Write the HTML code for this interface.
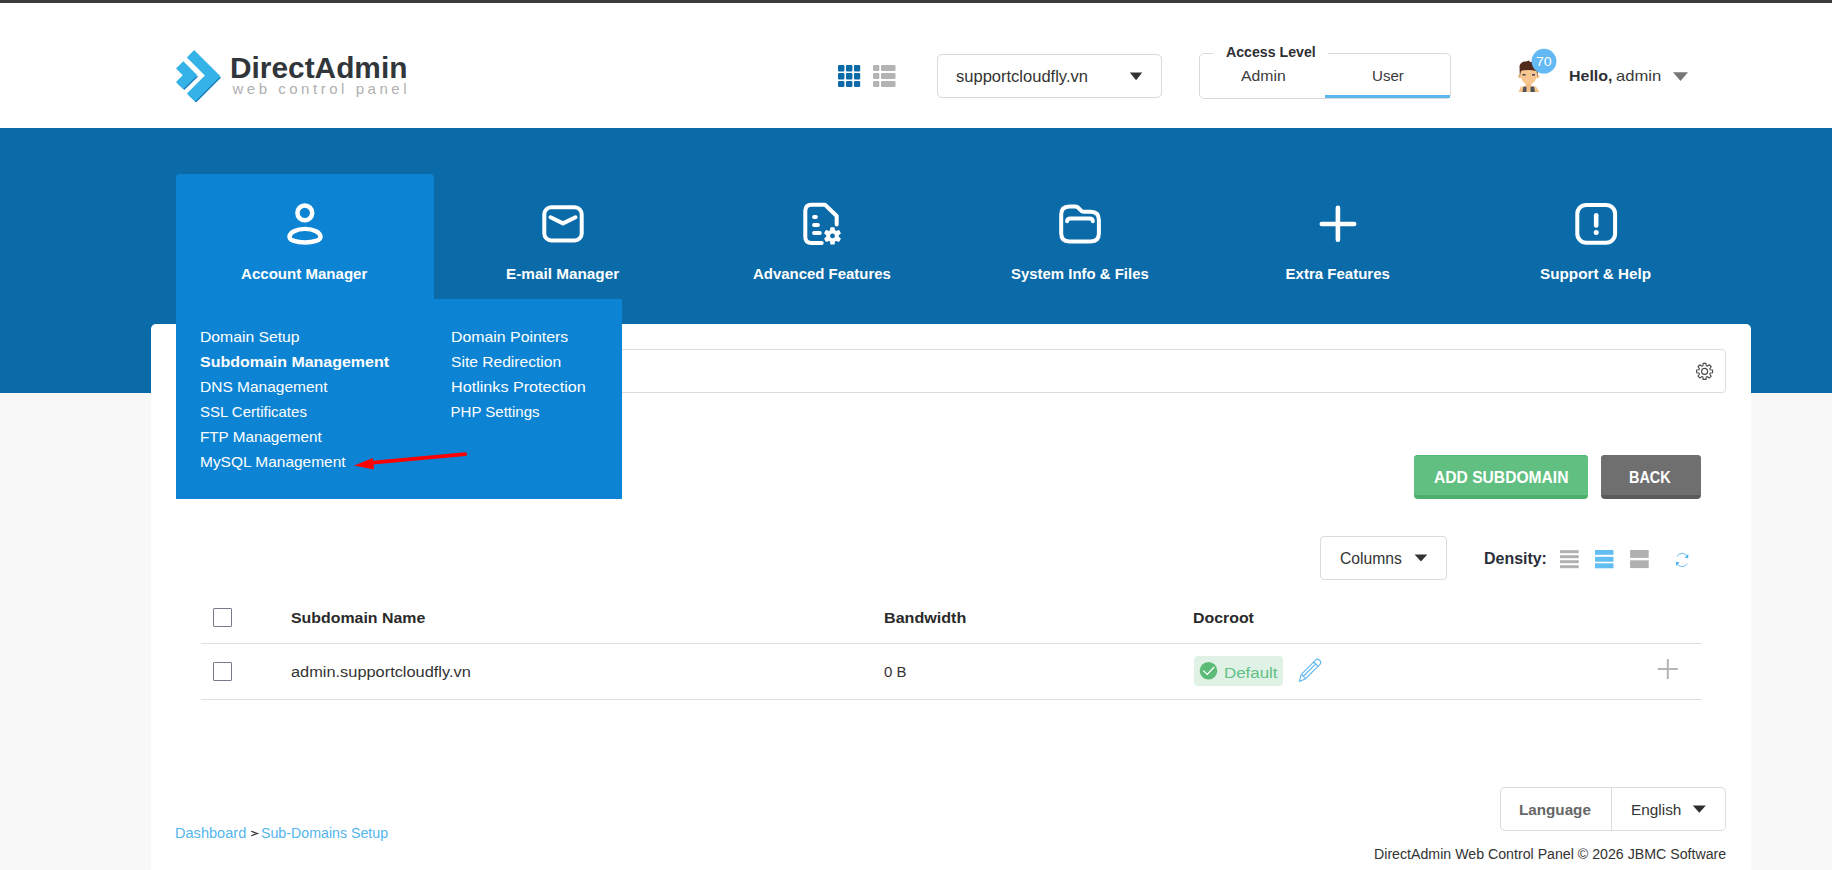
<!DOCTYPE html>
<html><head><meta charset="utf-8"><title>DirectAdmin</title>
<style>
html,body{margin:0;padding:0}
body{width:1832px;height:870px;overflow:hidden;position:relative;background:#f8f8f8;font-family:"Liberation Sans",sans-serif}
.a{position:absolute;box-sizing:border-box}
.t{position:absolute;line-height:1;white-space:pre;transform-origin:0 0}
svg.ov{position:absolute;left:0;top:0}
</style></head><body>
<div class="a" style="left:0;top:0;width:1832px;height:3px;background:#3b3b3b"></div>
<div class="a" style="left:0;top:3px;width:1832px;height:125px;background:#fff"></div>
<div class="a" style="left:0;top:128px;width:1832px;height:265px;background:#0b6aa8"></div>
<div class="a" style="left:151px;top:324px;width:1600px;height:600px;background:#fff;border-radius:5px 5px 0 0"></div>
<!-- search box -->
<div class="a" style="left:176px;top:349px;width:1550px;height:44px;border:1px solid #dcdcdc;border-radius:4px"></div>
<!-- active tab + dropdown -->
<div class="a" style="left:176px;top:174px;width:258px;height:126px;background:#0d84d3;border-radius:4px 4px 0 0"></div>
<div class="a" style="left:176px;top:298.5px;width:446px;height:200px;background:#0d84d3"></div>
<!-- header widgets -->
<div class="a" style="left:937px;top:54px;width:225px;height:44px;border:1px solid #d9d9d9;border-radius:5px"></div>
<div class="a" style="left:1199px;top:53px;width:252px;height:46px;border:1px solid #d9d9d9;border-radius:5px"></div>
<div class="a" style="left:1213px;top:50px;width:115px;height:8px;background:#fff"></div>
<div class="a" style="left:1325px;top:95px;width:125px;height:3px;background:#5db7ef"></div>
<!-- buttons -->
<div class="a" style="left:1414px;top:455px;width:174px;height:44px;background:#4caf6c;border-radius:4px"></div>
<div class="a" style="left:1414px;top:455px;width:174px;height:40px;background:#61bf81;border-radius:4px 4px 0 0;border-top:1px solid #56b776"></div>
<div class="a" style="left:1601px;top:455px;width:100px;height:44px;background:#5b5b5b;border-radius:4px"></div>
<div class="a" style="left:1601px;top:455px;width:100px;height:40px;background:#6f6f6f;border-radius:4px 4px 0 0"></div>
<!-- columns -->
<div class="a" style="left:1320px;top:536px;width:127px;height:43.5px;border:1px solid #dcdcdc;border-radius:4px"></div>
<!-- table -->
<div class="a" style="left:213px;top:608px;width:19px;height:19px;border:1px solid #767b8c;border-radius:1px"></div>
<div class="a" style="left:213px;top:662px;width:19px;height:19px;border:1px solid #767b8c;border-radius:1px"></div>
<div class="a" style="left:201px;top:643px;width:1500px;height:1px;background:#dedede"></div>
<div class="a" style="left:201px;top:699px;width:1500px;height:1px;background:#dedede"></div>
<div class="a" style="left:1194px;top:656px;width:89px;height:30px;background:#dff2e5;border-radius:4px"></div>
<!-- language -->
<div class="a" style="left:1500px;top:787px;width:226px;height:43.5px;border:1px solid #dcdcdc;border-radius:5px"></div>
<div class="a" style="left:1611px;top:788px;width:1px;height:42px;background:#dcdcdc"></div>

<svg class="ov" width="1832" height="870" viewBox="0 0 1832 870">
 <!-- logo -->
 <polygon points="205.9,76.5 221.4,77.3 196.1,102.6 187.9,94.5" fill="#1a7fbf"/>
 <polygon points="184.2,76.2 198.4,76.2 184.3,90.1 177,83" fill="#1a7fbf"/>
 <polygon points="194.1,50.1 220.4,76.3 195.1,101.6 186.9,93.5 204.9,75.5 186.9,57.5" fill="#35b3e8"/>
 <polygon points="183.3,61.3 197.3,75.2 183.3,89.1 176,81.9 182.7,75.2 176,68.5" fill="#35b3e8"/>
 <!-- grid/list -->
 <g fill="#0b69aa">
  <rect x="838" y="65" width="6.4" height="6.4" rx="1.2"/><rect x="846" y="65" width="6.4" height="6.4" rx="1.2"/><rect x="854" y="65" width="6.2" height="6.4" rx="1.2"/>
  <rect x="838" y="73" width="6.4" height="6.4" rx="1.2"/><rect x="846" y="73" width="6.4" height="6.4" rx="1.2"/><rect x="854" y="73" width="6.2" height="6.4" rx="1.2"/>
  <rect x="838" y="81" width="6.4" height="6" rx="1.2"/><rect x="846" y="81" width="6.4" height="6" rx="1.2"/><rect x="854" y="81" width="6.2" height="6" rx="1.2"/>
 </g>
 <g fill="#b3b3b3">
  <rect x="873" y="65" width="6.3" height="6" rx="1.2"/><rect x="881" y="65" width="14.5" height="6" rx="1.2"/>
  <rect x="873" y="73" width="6.3" height="6" rx="1.2"/><rect x="881" y="73" width="14.5" height="6" rx="1.2"/>
  <rect x="873" y="81" width="6.3" height="6" rx="1.2"/><rect x="881" y="81" width="14.5" height="6" rx="1.2"/>
 </g>
 <!-- select caret -->
 <polygon points="1129.8,72.5 1142.3,72.5 1136.05,80.2" fill="#333"/>
 <!-- avatar -->
 <g>
  <path d="M1518.5,92 L1521,86.5 L1536,86.5 L1539.5,92 Z" fill="#f5c28d"/>
  <path d="M1522.5,92 L1523.5,86.5 L1534,86.5 L1535,92 Z" fill="#4f5258"/>
  <rect x="1526.5" y="86" width="4" height="6" fill="#f5c28d"/>
  <rect x="1525.5" y="82" width="6" height="5" fill="#f2bb82"/>
  <circle cx="1519.8" cy="76.5" r="1.8" fill="#f5c28d"/>
  <circle cx="1537.6" cy="76.5" r="1.8" fill="#f5c28d"/>
  <ellipse cx="1528.7" cy="74.5" rx="8.3" ry="9.8" fill="#f7c690"/>
  <path d="M1519.8,77 L1519.5,66 Q1521,61 1526,61.5 L1529,60.5 L1530,62 Q1537,61.5 1537.8,67 L1537.6,77 L1536.5,71 Q1528,69 1521,71 Z" fill="#52291a"/>
  <rect x="1522.5" y="74" width="3" height="1.6" fill="#4a4a55"/>
  <rect x="1532" y="74" width="3" height="1.6" fill="#4a4a55"/>
 </g>
 <circle cx="1544" cy="61.2" r="12.4" fill="#62b9f3"/>
 <polygon points="1673,72.3 1688,72.3 1680.5,81" fill="#777"/>
 <!-- nav icons -->
 <g fill="none" stroke="#fff" stroke-linecap="round" stroke-linejoin="round">
  <circle cx="304.8" cy="212.9" r="7.4" stroke-width="4.5"/>
  <path d="M289.5,236.9 C289.5,232.4 296.4,228.9 305,228.9 C313.6,228.9 320.5,232.4 320.5,236.9 C320.5,240.1 313.6,242.5 305,242.5 C296.4,242.5 289.5,240.1 289.5,236.9 Z" stroke-width="4.4"/>
  <rect x="544.3" y="207.3" width="37.4" height="33.2" rx="7" stroke-width="4"/>
  <polyline points="550.5,217.3 563,223.4 575.5,217.3" stroke-width="4"/>
  <path d="M821.7,243.1 L811.6,243.1 Q805.3,243.1 805.3,236.8 L805.3,211 Q805.3,204.7 811.6,204.7 L825,204.7 L836.7,216 L836.7,224.5" stroke-width="4"/>
  <path d="M814.1,216.9 L815.9,216.9 M814.1,225.1 L817.9,225.1 M814.1,233.1 L819.8,233.1" stroke-width="4"/>
  <path d="M1069.4,206.4 L1075.5,206.4 C1079.5,206.4 1079.5,211.7 1083.5,211.7 L1090.7,211.7 Q1098.9,211.7 1098.9,219.9 L1098.9,233.2 Q1098.9,241.4 1090.7,241.4 L1069.4,241.4 Q1061.2,241.4 1061.2,233.2 L1061.2,214.6 Q1061.2,206.4 1069.4,206.4 Z" stroke-width="4"/>
  <path d="M1067.1,221.3 Q1067.1,218.5 1070.5,218.5 L1089.5,218.5 Q1092.8,218.5 1092.8,221.3" stroke-width="4"/>
  <path d="M1337.9,207.8 L1337.9,239.8 M1321.8,224 L1354.2,224" stroke-width="4.6"/>
  <rect x="1577.3" y="204.9" width="37.8" height="37.8" rx="9" stroke-width="4"/>
  <path d="M1596.2,215.3 L1596.2,225.4" stroke-width="4.6"/>
 </g>
 <circle cx="1596.2" cy="232.6" r="2.5" fill="#fff"/>
 <!-- gear on file icon -->
 <g transform="translate(832.5,235.9)" fill="#fff">
  <circle r="6.3"/>
  <rect x="-2.3" y="-8.7" width="4.6" height="17.4" rx="1.2"/>
  <rect x="-2.3" y="-8.7" width="4.6" height="17.4" rx="1.2" transform="rotate(60)"/>
  <rect x="-2.3" y="-8.7" width="4.6" height="17.4" rx="1.2" transform="rotate(120)"/>
  <circle r="2.4" fill="#0b6aa8"/>
 </g>
 <!-- search gear -->
 <g transform="translate(1704.6,371.4)" fill="none" stroke="#4a4a4a" stroke-width="1.1">
  <path d="M-1.63,-5.67 L-1.41,-7.98 L1.41,-7.98 L1.63,-5.67 L2.86,-5.16 L4.65,-6.64 L6.64,-4.65 L5.16,-2.86 L5.67,-1.63 L7.98,-1.41 L7.98,1.41 L5.67,1.63 L5.16,2.86 L6.64,4.65 L4.65,6.64 L2.86,5.16 L1.63,5.67 L1.41,7.98 L-1.41,7.98 L-1.63,5.67 L-2.86,5.16 L-4.65,6.64 L-6.64,4.65 L-5.16,2.86 L-5.67,1.63 L-7.98,1.41 L-7.98,-1.41 L-5.67,-1.63 L-5.16,-2.86 L-6.64,-4.65 L-4.65,-6.64 L-2.86,-5.16 Z" stroke-linejoin="round"/>
  <circle r="3"/>
 </g>
 <!-- columns caret -->
 <polygon points="1414.6,554.6 1427.3,554.6 1420.95,561.6" fill="#333"/>
 <!-- density -->
 <g fill="#b0b0b0">
  <rect x="1560" y="550.2" width="18.7" height="3"/><rect x="1560" y="555.2" width="18.7" height="3"/>
  <rect x="1560" y="560.2" width="18.7" height="3"/><rect x="1560" y="565.2" width="18.7" height="3"/>
 </g>
 <g fill="#62bdf3">
  <rect x="1595" y="550" width="18.5" height="4.8"/><rect x="1595" y="556.8" width="18.5" height="4.9"/><rect x="1595" y="563.3" width="18.5" height="5"/>
 </g>
 <g fill="#b0b0b0">
  <rect x="1630.1" y="550" width="18.6" height="7.9"/><rect x="1630.1" y="560.3" width="18.6" height="7.8"/>
 </g>
 <g fill="none" stroke="#6cbdf0" stroke-width="1">
  <path d="M1687.6,557.5 A5.7,5.7 0 0 0 1677,556.5"/>
  <path d="M1676.6,562.5 A5.7,5.7 0 0 0 1687.2,563.5"/>
 </g>
 <polygon points="1688.2,554 1688.3,558.5 1684.5,557.6" fill="#5cb6ee"/>
 <polygon points="1676,566 1675.9,561.5 1679.7,562.4" fill="#5cb6ee"/>
 <!-- default badge -->
 <circle cx="1208.5" cy="670.8" r="8.8" fill="#5dbb78"/>
 <polyline points="1203.2,670.6 1207.2,674.4 1214.2,667" fill="none" stroke="#fff" stroke-width="1.3"/>
 <!-- pencil -->
 <g fill="none" stroke="#5db5ee" stroke-width="1.1" stroke-linejoin="round">
  <path d="M1299.4,681.4 L1301.3,674.3 L1315.8,659.8 Q1317.5,658.3 1319.6,660.2 Q1321.6,662.3 1320.2,664.2 L1305.7,678.7 Z"/>
  <path d="M1301.3,674.3 L1305.7,678.7 M1313.6,662 L1318,666.4 M1303.6,676 L1316.2,663.4"/>
 </g>
 <!-- row plus -->
 <path d="M1667.8,659 L1667.8,679 M1657.8,669 L1677.8,669" stroke="#b5b5b5" stroke-width="2"/>
 <!-- language caret -->
 <polygon points="1692.8,805.5 1705.8,805.5 1699.3,812.8" fill="#2d2d2d"/>
 <polyline points="251.2,831.3 257.4,833.5 251.2,835.7" fill="none" stroke="#333" stroke-width="1.2"/>
 <!-- red arrow -->
 <path d="M372.9,462.6 L465.3,454.1" stroke="#ff0000" stroke-width="3.8" stroke-linecap="round"/>
 <polygon points="354.1,465.4 372.9,458 374,469.4" fill="#ff0000"/>
</svg>
<div class="t" style="left:229.94px;top:54.00px;font-size:29px;font-weight:700;color:#31363b;transform:scaleX(1.0290);">DirectAdmin</div>
<div class="t" style="left:232.40px;top:81.10px;font-size:15px;font-weight:400;color:#b0b0b0;letter-spacing:3.531px;">web control panel</div>
<div class="t" style="left:955.87px;top:68.70px;font-size:16px;font-weight:400;color:#333;transform:scaleX(1.0325);">supportcloudfly.vn</div>
<div class="t" style="left:1225.80px;top:44.10px;font-size:15px;font-weight:700;color:#2f3036;transform:scaleX(0.9436);">Access Level</div>
<div class="t" style="left:1240.80px;top:68.00px;font-size:15px;font-weight:400;color:#3a3a3a;transform:scaleX(1.0524);">Admin</div>
<div class="t" style="left:1371.79px;top:68.00px;font-size:15px;font-weight:400;color:#3a3a3a;transform:scaleX(1.0065);">User</div>
<div class="t" style="left:1536.03px;top:56.00px;font-size:12px;font-weight:400;color:#fff;transform:scaleX(1.1750);">70</div>
<div class="t" style="left:1568.84px;top:67.90px;font-size:15px;font-weight:700;color:#2f3036;transform:scaleX(1.0641);">Hello,</div>
<div class="t" style="left:1615.69px;top:67.90px;font-size:15px;font-weight:400;color:#3a3a3a;transform:scaleX(1.1077);">admin</div>
<div class="t" style="left:241.30px;top:265.70px;font-size:15px;font-weight:700;color:#fff;transform:scaleX(1.0040);">Account Manager</div>
<div class="t" style="left:506.18px;top:265.70px;font-size:15px;font-weight:700;color:#fff;transform:scaleX(1.0209);">E-mail Manager</div>
<div class="t" style="left:752.50px;top:265.70px;font-size:15px;font-weight:700;color:#fff;transform:scaleX(0.9964);">Advanced Features</div>
<div class="t" style="left:1010.50px;top:265.70px;font-size:15px;font-weight:700;color:#fff;transform:scaleX(0.9956);">System Info &amp; Files</div>
<div class="t" style="left:1285.60px;top:265.70px;font-size:15px;font-weight:700;color:#fff;">Extra Features</div>
<div class="t" style="left:1540.48px;top:265.70px;font-size:15px;font-weight:700;color:#fff;transform:scaleX(1.0185);">Support &amp; Help</div>
<div class="t" style="left:200.45px;top:328.80px;font-size:15px;font-weight:400;color:#fff;transform:scaleX(1.0479);">Domain Setup</div>
<div class="t" style="left:199.84px;top:353.80px;font-size:15px;font-weight:700;color:#fff;transform:scaleX(1.0648);">Subdomain Management</div>
<div class="t" style="left:200.47px;top:378.80px;font-size:15px;font-weight:400;color:#fff;transform:scaleX(1.0336);">DNS Management</div>
<div class="t" style="left:199.90px;top:403.80px;font-size:15px;font-weight:400;color:#fff;">SSL Certificates</div>
<div class="t" style="left:200.48px;top:428.80px;font-size:15px;font-weight:400;color:#fff;transform:scaleX(1.0160);">FTP Management</div>
<div class="t" style="left:200.47px;top:453.80px;font-size:15px;font-weight:400;color:#fff;transform:scaleX(1.0314);">MySQL Management</div>
<div class="t" style="left:450.54px;top:328.80px;font-size:15px;font-weight:400;color:#fff;transform:scaleX(1.0573);">Domain Pointers</div>
<div class="t" style="left:450.56px;top:353.80px;font-size:15px;font-weight:400;color:#fff;transform:scaleX(1.0404);">Site Redirection</div>
<div class="t" style="left:450.52px;top:378.80px;font-size:15px;font-weight:400;color:#fff;transform:scaleX(1.0772);">Hotlinks Protection</div>
<div class="t" style="left:450.60px;top:403.80px;font-size:15px;font-weight:400;color:#fff;">PHP Settings</div>
<div class="t" style="left:1434.10px;top:470.10px;font-size:16px;font-weight:700;color:#fff;transform:scaleX(0.9759);">ADD SUBDOMAIN</div>
<div class="t" style="left:1629.20px;top:470.10px;font-size:16px;font-weight:700;color:#fff;transform:scaleX(0.9022);">BACK</div>
<div class="t" style="left:1339.82px;top:551.30px;font-size:16px;font-weight:400;color:#333;transform:scaleX(0.9806);">Columns</div>
<div class="t" style="left:1483.50px;top:550.80px;font-size:16px;font-weight:700;color:#2b2f3a;transform:scaleX(0.9967);">Density:</div>
<div class="t" style="left:291.14px;top:610.40px;font-size:15px;font-weight:700;color:#2a2a2a;transform:scaleX(1.0600);">Subdomain Name</div>
<div class="t" style="left:883.53px;top:610.30px;font-size:15px;font-weight:700;color:#2a2a2a;transform:scaleX(1.0733);">Bandwidth</div>
<div class="t" style="left:1193.24px;top:610.30px;font-size:15px;font-weight:700;color:#2a2a2a;transform:scaleX(1.0589);">Docroot</div>
<div class="t" style="left:291.14px;top:664.20px;font-size:15.5px;font-weight:400;color:#333;transform:scaleX(1.0556);">admin.supportcloudfly.vn</div>
<div class="t" style="left:883.63px;top:664.20px;font-size:15.5px;font-weight:400;color:#333;transform:scaleX(0.9682);">0 B</div>
<div class="t" style="left:1223.71px;top:664.50px;font-size:15.5px;font-weight:400;color:#62bf85;transform:scaleX(1.0896);">Default</div>
<div class="t" style="left:1519.29px;top:802.10px;font-size:15px;font-weight:700;color:#666;transform:scaleX(1.0143);">Language</div>
<div class="t" style="left:1630.88px;top:802.10px;font-size:15px;font-weight:400;color:#333;transform:scaleX(1.0234);">English</div>
<div class="t" style="left:1373.89px;top:847.20px;font-size:14px;font-weight:400;color:#333;transform:scaleX(1.0127);">DirectAdmin Web Control Panel © 2026 JBMC Software</div>
<div class="t" style="left:175.46px;top:825.90px;font-size:14px;font-weight:400;color:#55b5ed;transform:scaleX(1.0403);">Dashboard</div>
<div class="t" style="left:261.29px;top:825.90px;font-size:14px;font-weight:400;color:#55b5ed;transform:scaleX(1.0145);">Sub-Domains Setup</div>
</body></html>
